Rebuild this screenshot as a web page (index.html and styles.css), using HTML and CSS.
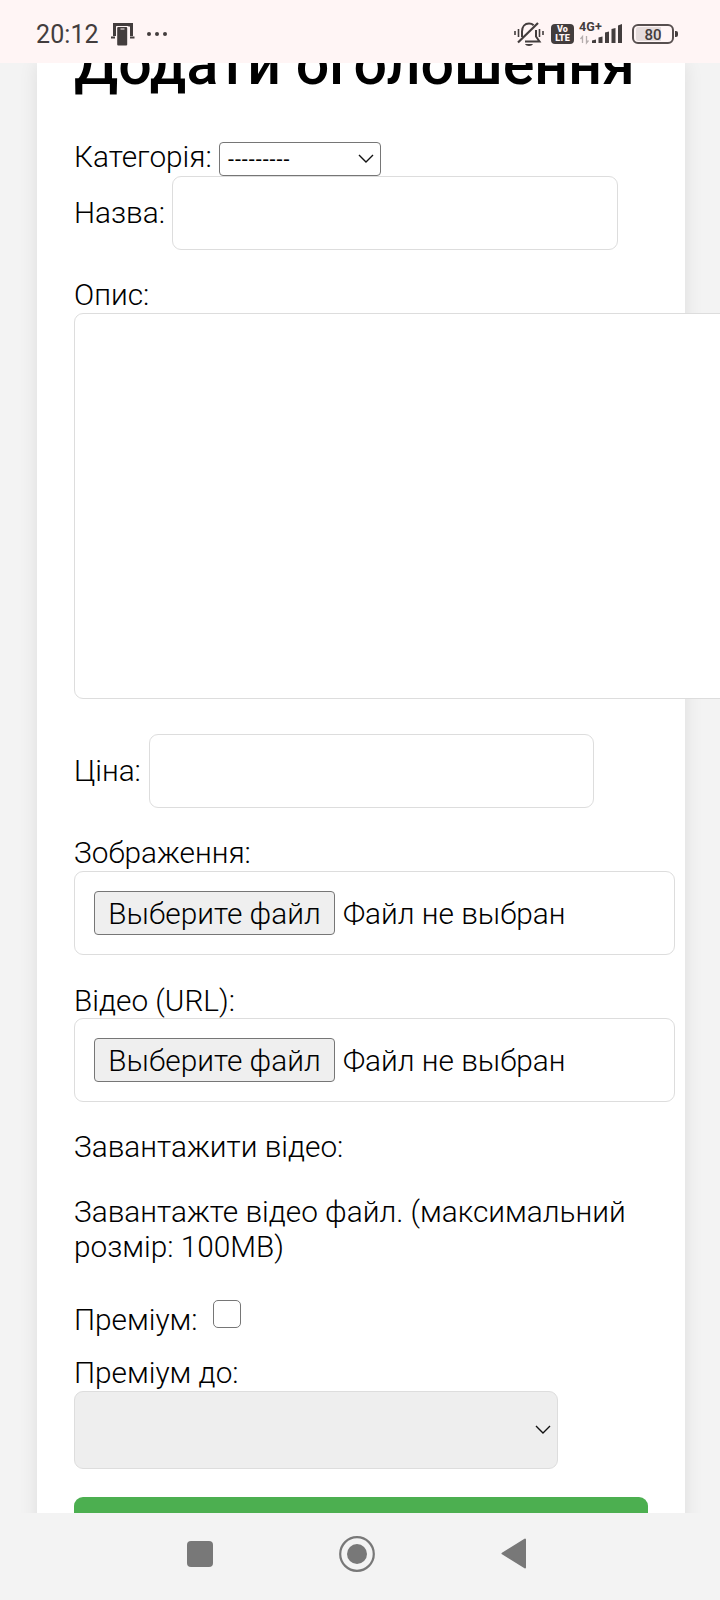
FILE: index.html
```html
<!DOCTYPE html>
<html lang="uk">
<head>
<meta charset="utf-8">
<title>Додати оголошення</title>
<link rel="stylesheet" href="styles.css">
</head>
<body>
<header class="status">
  <span class="clock">20:12</span>
  <svg class="cast" width="26" height="24" viewBox="0 0 26 24">
    <path d="M3 1h20v13h-3V4.500H6V14H3z" fill="#433d3d"/>
    <path d="M1 15.500h4M20 15.500h4.500" stroke="#433d3d" stroke-width="2"/>
    <rect x="6" y="4" width="12.500" height="20" rx="1" fill="#fff5f5"/>
    <rect x="7.200" y="5" width="10" height="18.500" rx="1" fill="#433d3d"/>
    <path d="M10.500 7h4" stroke="#fff5f5"/>
  </svg>
  <svg class="dots" width="22" height="6" viewBox="0 0 22 6" fill="#433d3d"><circle cx="3" cy="3" r="2"/><circle cx="11" cy="3" r="2"/><circle cx="19" cy="3" r="2"/></svg>
  <svg class="mute" width="30" height="26" viewBox="0 0 30 26" fill="none" stroke="#433d3d" stroke-width="2">
    <path d="M8 16V10.500C8 5.500 11 2.500 15 2.500c2 0 3.500.6 4.600 1.700M22 9v6.500l3.500 5H11" />
    <path d="M4 21.500L24 2" stroke-width="2.200"/>
    <path d="M1 10v4M4.500 8v8M25.500 8v8M29 10v4" stroke-width="1.600"/>
    <path d="M11 23h8c-1 2.500-7 2.500-8 0z" fill="#433d3d" stroke="none"/>
  </svg>
  <span class="volte"><span>Vo</span><span>LTE</span></span>
  <span class="network">
    <span class="generation">4G+</span>
    <svg width="44" height="22" viewBox="0 0 44 22">
      <path d="M3.500 20v-6.500l-2 2.500M7.500 13v7l2-2.500" fill="none" stroke="#b5adad" stroke-width="1.300"/>
      <path d="M13 20v-2.500l4-1V20zM19.500 20v-5.500l4-1V20zM26 20V9.500l4-1V20zM32.500 20V6l4-1V20zM39 20V2.500l4-1.500V20z" fill="#433d3d"/>
    </svg>
  </span>
  <span class="battery">80</span>
</header>
<main class="viewport">
  <form class="card">
    <h1 class="title">Додати оголошення</h1>
    <div class="row category">
      <label>Категорія:</label>
      <div class="select">---------
        <svg class="chevron" width="16" height="10" viewBox="0 0 16 10"><path d="M1 1l7 7 7-7"/></svg>
      </div>
    </div>
    <div class="row name"><label>Назва:</label><input class="field" type="text"></div>
    <label class="description-label">Опис:</label>
    <textarea class="field description"></textarea>
    <div class="row price"><label>Ціна:</label><input class="field" type="text"></div>
    <label class="image-label">Зображення:</label>
    <div class="file"><button type="button" class="choose">Выберите файл</button><span>Файл не выбран</span></div>
    <label class="video-label">Відео (URL):</label>
    <div class="file file-video"><button type="button" class="choose">Выберите файл</button><span>Файл не выбран</span></div>
    <label class="upload-label">Завантажити відео:</label>
    <p class="hint">Завантажте відео файл. (максимальний розмір: 100MB)</p>
    <div class="row premium"><label>Преміум:</label><input class="check" type="checkbox"></div>
    <label class="until-label">Преміум до:</label>
    <div class="until"><svg class="chevron" width="16" height="10" viewBox="0 0 16 10"><path d="M1 1l7 7 7-7"/></svg></div>
    <button type="button" class="submit" aria-label="Додати"></button>
  </form>
</main>
<nav class="navbar">
  <svg width="26" height="26" viewBox="0 0 26 26"><rect width="26" height="26" rx="4" fill="#787878"/></svg>
  <svg width="36" height="36" viewBox="0 0 36 36"><circle cx="18" cy="18" r="16.800" fill="none" stroke="#787878" stroke-width="2.200"/><circle cx="18" cy="18" r="10" fill="#787878"/></svg>
  <svg width="25" height="31" viewBox="0 0 25 31"><path d="M1.500 15.500L24 1.500v28z" fill="#787878" stroke="#787878" stroke-width="2" stroke-linejoin="round"/></svg>
</nav>
</body>
</html>
```
FILE: styles.css
```css
* { box-sizing: border-box; }
body {
  margin: 0;
  width: 720px;
  height: 1600px;
  display: flex;
  flex-direction: column;
  overflow: hidden;
  background: #f3f3f3;
  font: 300 29.770px/35px Roboto, sans-serif;
  color: #000;
}
.status {
  height: 62.500px;
  flex: none;
  display: flex;
  align-items: center;
  padding: 5px 46px 0 36px;
  background: #fff5f5;
  color: #433d3d;
}
.clock { font-size: 25px; font-weight: 400; width: 63px; padding-top: 1px; letter-spacing: .1px; }
.cast { margin-left: 11px; }
.dots { margin-left: 10px; }
.mute { margin-left: auto; }
.volte {
  width: 23px;
  height: 20px;
  margin-left: 7px;
  padding-top: 1px;
  border-radius: 4px;
  background: #433d3d;
  color: #fff5f5;
  display: flex;
  flex-direction: column;
  align-items: center;
  font-size: 9px;
  line-height: 9px;
  font-weight: 900;
}
.network { position: relative; width: 44px; height: 22px; margin-left: 5px; display: flex; }
.generation { position: absolute; left: 0; top: -3px; font-size: 12.500px; line-height: 14px; font-weight: 700; letter-spacing: .2px; }
.battery {
  position: relative;
  width: 42px;
  height: 20px;
  margin-left: 9px;
  border: 2px solid #574f4f;
  border-radius: 6px;
  background: linear-gradient(90deg, #e5dcdc 0 27px, #fff5f5 27px);
  background-clip: content-box;
  padding: 1px 2px;
  font-size: 15px;
  line-height: 16px;
  font-weight: 500;
  text-align: center;
}
.battery::after {
  content: "";
  position: absolute;
  right: -6px;
  top: 5px;
  width: 3px;
  height: 6px;
  border-radius: 0 2px 2px 0;
  background: #433d3d;
}
.viewport { height: 1450.500px; flex: none; overflow: hidden; padding: 0 35px 0 37px; }
.card {
  width: 648px;
  height: 1500px;
  padding: 0 37px;
  background: #fff;
  box-shadow: 0 0 18px rgba(0, 0, 0, .09);
  display: flex;
  flex-direction: column;
  align-items: flex-start;
}
.card > * { flex: none; }
.title { margin: -34px 0 0; height: 70px; font-size: 59.200px; line-height: 70px; font-weight: 500; white-space: nowrap; }
.row { display: flex; align-items: flex-start; }
label, .file, .choose { white-space: nowrap; }
.category { height: 34px; margin-top: 43.500px; }
.category label { width: 145px; margin-top: -3px; }
.select {
  position: relative;
  width: 162px;
  height: 34px;
  padding: 0 7.500px;
  border: 1px solid #767676;
  border-radius: 4px;
  font: 400 20.800px/32px "Liberation Sans", sans-serif;
}
.chevron { position: absolute; right: 6.500px; top: 50%; margin-top: -5px; fill: none; stroke: #111; stroke-width: 1.400; }
.field { appearance: none; width: 445.500px; height: 74px; margin: 0; border: 1px solid #ddd; border-radius: 9px; background: #fff; outline: 0; }
.name label { width: 98px; padding-top: 19px; }
.description-label { margin-top: 27px; }
.description { width: 760px; height: 385.500px; margin-top: 1px; resize: none; }
.price { margin-top: 35.500px; }
.price label { width: 75px; padding-top: 19px; }
.price .field { width: 445px; }
.image-label { margin-top: 27px; }
.file {
  display: flex;
  align-items: center;
  width: 600.500px;
  height: 84px;
  margin-top: 1px;
  padding-left: 19px;
  border: 1px solid #ddd;
  border-radius: 9px;
}
.choose { width: 241px; height: 44px; margin-right: 8px; padding: 0; border: 1px solid #767676; border-radius: 4px; background: #efefef; font: inherit; color: inherit; }
.video-label { margin-top: 28px; }
.file-video { margin-top: 0; }
.upload-label { margin-top: 27px; }
.hint { width: 574px; margin: 30px 0 0; }
.premium { margin-top: 35.500px; height: 36.500px; }
.premium label { width: 138.500px; padding-top: 2px; }
.check { appearance: none; width: 28px; height: 28px; margin: 0; border: 1.500px solid #767676; border-radius: 5px; background: #fff; }
.until-label { margin-top: 19px; }
.until { position: relative; width: 484px; height: 77.500px; margin-top: 1px; border: 1px solid #ddd; border-radius: 9px; background: #eee; }
.submit { width: 574px; height: 70px; margin-top: 28.500px; border: 0; border-radius: 9px; background: #4caf50; }
.navbar { height: 87px; display: flex; align-items: center; padding: 0 194px 6px 187px; justify-content: space-between; background: #f3f3f3; }
```
